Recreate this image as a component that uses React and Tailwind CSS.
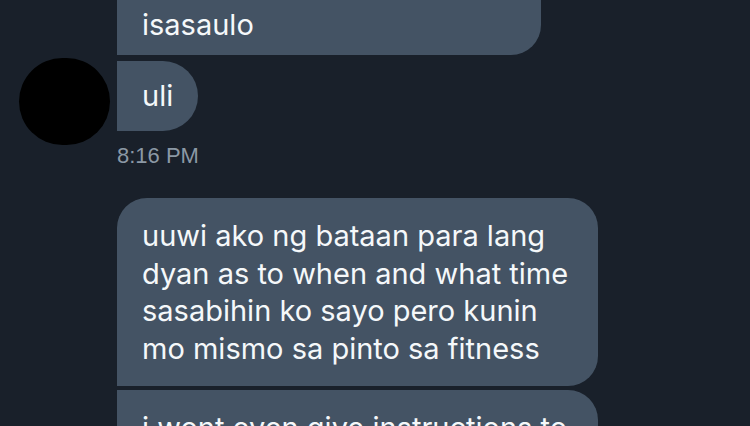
import React from 'react';

const font = { fontFamily: 'Inter, "Liberation Sans", sans-serif' };

const Bubble = ({ lines, className }) => (
  <div className={`bg-[#445364] text-[#f5f8fa] text-[29px] leading-[37.5px] ${className}`}>
    {lines.map((l) => (
      <div key={l} className="whitespace-nowrap">{l}</div>
    ))}
  </div>
);

export default function App() {
  return (
    <div className="w-[750px] h-[426px] bg-[#19202a] overflow-hidden" style={font}>
      {/* previous bubble, cut off at top */}
      <div className="ml-[117px] w-[424px] h-[55px] bg-[#445364] rounded-br-[30px] flex items-end pl-[25px] pb-[12px]">
        <span className="text-[#f5f8fa] text-[29px] leading-[37.5px]">isasaulo</span>
      </div>

      <div className="flex items-start mt-[6px]">
        <div className="w-[117px] flex justify-start pl-[19px]">
          <div className="w-[91px] h-[87px] rounded-full bg-black -mt-[3px] -mb-[14px]" />
        </div>
        <div className="h-[70px] pl-[25px] pr-[25px] bg-[#445364] rounded-r-[35px] flex items-center">
          <span className="text-[#f5f8fa] text-[29px] leading-[37.5px]">uli</span>
        </div>
      </div>

      <div className="ml-[117px] mt-[12px] text-[#8b98a5] text-[22px] leading-[26px]" style={{ fontFamily: '"Liberation Sans", Arial, sans-serif' }}>
        8:16 PM
      </div>

      <div className="ml-[117px] mt-[29px] flex flex-col gap-[4px]">
        <Bubble
          className="w-[481px] rounded-tl-[30px] rounded-tr-[30px] rounded-br-[30px] pl-[25px] py-[19px]"
          lines={[
            'uuwi ako ng bataan para lang',
            'dyan as to when and what time',
            'sasabihin ko sayo pero kunin',
            'mo mismo sa pinto sa fitness',
          ]}
        />
        <Bubble
          className="w-[481px] rounded-tr-[30px] pl-[25px] py-[19px]"
          lines={['i wont even give instructions to', 'the']}
        />
      </div>
    </div>
  );
}
